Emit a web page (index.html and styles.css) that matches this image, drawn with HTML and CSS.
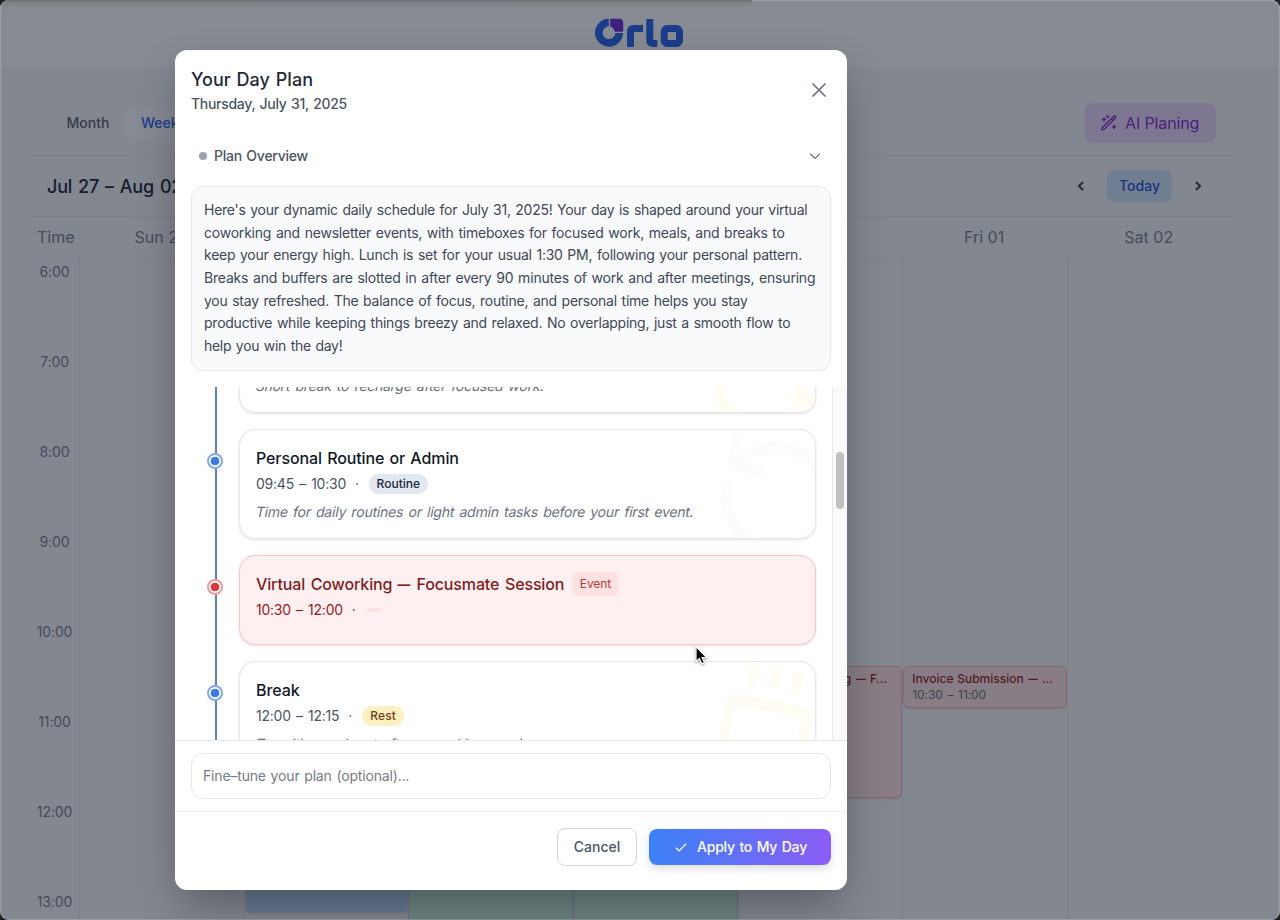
FILE: index.html
```html
<!DOCTYPE html>
<html lang="en"><head><meta charset="utf-8"><title>Orlo</title><link rel="stylesheet" href="styles.css"></head>
<body>
<div class="page">
  <header class="topbar">
    <svg class="logo" width="90" height="32" viewBox="0 0 90 32" role="img" aria-label="Orlo">
      <g fill="none" stroke="#2563eb">
        <path d="M13.800 4.500A10.200 10.200 0 1 0 24.200 15" stroke-width="7.600"/>
        <path d="M35.500 29V13.500q0-3 3-3h9.500" stroke-width="7"/>
        <path d="M54.800 1v21.500q0 3 3 3h4.500" stroke-width="7"/>
        <rect x="69.200" y="10.500" width="15.300" height="15" rx="3" stroke-width="7"/>
      </g>
      <path d="M15.200.7h9q4 0 4 4v9h-8.400q-.5-4.200-4.600-5.300z" fill="#6d28d9"/>
    </svg>
  </header>
  <main class="calendar">
    <div class="views"><div class="tabs"><span class="tab">Month</span><span class="tab tab-on">Week</span></div>
      <button class="ai"><svg width="16" height="16" viewBox="0 0 16 16" fill="none" stroke="currentColor" stroke-width="1.400" stroke-linecap="round" stroke-linejoin="round"><path d="M1.200 12.800 12.800 1.200q1-.6 1.700.2t0 1.600L3 14.600q-1 .6-1.800-.1t0-1.700zM10.500 3.800l1.700 1.700M3 3v3M1.500 4.500h3M6.500.8v1.800M5.600 1.700h1.800M13 10.200v3.200M11.400 11.800h3.200"/></svg><span>AI Planing</span></button></div>
    <div class="range"><h2>Jul 27 – Aug 02</h2><div class="nav"><svg width="24" height="24" viewBox="0 0 24 24"><path d="m14 8-4 4 4 4"/></svg><span class="today">Today</span><svg width="24" height="24" viewBox="0 0 24 24"><path d="m10 8 4 4-4 4"/></svg></div></div>
    <div class="days"><span class="time">Time</span><span>Sun 27</span><span>Mon 28</span><span>Tue 29</span><span>Wed 30</span><span>Thu 31</span><span>Fri 01</span><span>Sat 02</span></div>
    <div class="grid">
      <div class="hours"><span>6:00</span><span>7:00</span><span>8:00</span><span>9:00</span><span>10:00</span><span>11:00</span><span>12:00</span><span>13:00</span></div>
      <div class="col"></div>
      <div class="col"><div class="event blue"></div></div>
      <div class="col"><div class="event green"></div></div>
      <div class="col"><div class="event green"></div></div>
      <div class="col"><div class="event red tall"><b>Virtual Coworking <span class="dash">—</span> F…</b></div></div>
      <div class="col"><div class="event red"><b>Invoice Submission <span class="dash">—</span> …</b><span>10:30 – 11:00</span></div></div>
      <div class="col"></div>
    </div>
  </main>
</div>
<div class="overlay"><div class="loading"></div>
  <section class="modal">
    <div class="modal-head"><div><h1>Your Day Plan</h1><p>Thursday, July 31, 2025</p></div><svg width="24" height="24" viewBox="0 0 24 24"><path d="m5.500 5.500 13 13m0-13-13 13"/></svg></div>
    <div class="overview"><i></i><span>Plan Overview</span><svg width="14" height="14" viewBox="0 0 14 14"><path d="m2.200 4.800 4.800 4.700 4.800-4.700"/></svg></div>
    <div class="summary"><span class="s1">Here's your dynamic daily schedule for July 31, 2025! Your day is shaped around your virtual</span><span class="s2">coworking and newsletter events, with timeboxes for focused work, meals, and breaks to</span><span class="s3">keep your energy high. Lunch is set for your usual 1:30 PM, following your personal pattern.</span><span class="s4">Breaks and buffers are slotted in after every 90 minutes of work and after meetings, ensuring</span><span class="s5">you stay refreshed. The balance of focus, routine, and personal time helps you stay</span><span class="s6">productive while keeping things breezy and relaxed. No overlapping, just a smooth flow to</span><span class="s7">help you win the day!</span></div>
    <div class="scroll">
      <div class="timeline">
        <div class="item first"><article class="card"><svg class="mark yellow" width="134" height="134" viewBox="0 0 24 24"><path d="M10 2v2M14 2v2M6 2v2M16 8a1 1 0 0 1 1 1v8a4 4 0 0 1-4 4H7a4 4 0 0 1-4-4V9a1 1 0 0 1 1-1h14a4 4 0 1 1 0 8h-1"/></svg><p class="desc">Short break to recharge after focused work.</p></article></div>
        <div class="item routine-item"><i class="dot"></i><article class="card"><svg class="mark gray" width="134" height="134" viewBox="0 0 24 24"><path d="M3 12a9 9 0 1 0 9-9 9.750 9.750 0 0 0-6.740 2.740L3 8M3 3v5h5"/></svg><h3 class="t-routine">Personal Routine or Admin</h3><p class="meta"><time>09:45 – 10:30</time><em>·</em><span class="tag routine">Routine</span></p><p class="desc d2">Time for daily routines or light admin tasks before your first event.</p></article></div>
        <div class="item event-item"><i class="dot danger"></i><article class="card danger-card"><h3><span class="t-event">Virtual Coworking <span class="dash">—</span> Focusmate Session</span><span class="event-tag">Event</span></h3><p class="meta"><time>10:30 – 12:00</time><em>·</em><span class="empty-tag"></span></p></article></div>
        <div class="item break-item"><i class="dot"></i><article class="card"><svg class="mark yellow" width="134" height="134" viewBox="0 0 24 24"><path d="M10 2v2M14 2v2M6 2v2M16 8a1 1 0 0 1 1 1v8a4 4 0 0 1-4 4H7a4 4 0 0 1-4-4V9a1 1 0 0 1 1-1h14a4 4 0 1 1 0 8h-1"/></svg><h3 class="t-break">Break</h3><p class="meta"><time>12:00 – 12:15</time><em>·</em><span class="tag rest">Rest</span></p><p class="desc">Transition and rest after coworking session.</p></article></div>
      </div>
      <div class="track"><div class="thumb"></div></div>
    </div>
    <div class="tune"><div class="input">Fine–tune your plan (optional)...</div></div>
    <footer><button class="cancel">Cancel</button><button class="apply"><svg width="16" height="16" viewBox="0 0 16 16"><path d="m3 8.700 3.200 3.200L13 4.800"/></svg><span>Apply to My Day</span></button></footer>
  </section>
</div>
<svg class="cursor" width="16" height="22" viewBox="0 0 16 22"><path d="M2 1.500v15.300l3.400-3.200 2.300 5.200 2.700-1.200-2.300-5.100h4.600z" fill="#000" stroke="#fff" stroke-width="1.200"/></svg>
</body></html>
```
FILE: styles.css
```css
*{box-sizing:border-box}
body{margin:0;width:1280px;height:920px;overflow:hidden;font-family:Inter,sans-serif;background:#222;position:relative}
h1,h2,h3,p{margin:0;font-weight:500}
button{font-family:inherit;border:0}
svg{flex:none}
span,time,b{white-space:nowrap}
.page{width:1280px;height:920px;background:#f5f6f8;border-radius:9px;overflow:hidden}
.topbar{height:68px;background:#fbfcfd;display:flex;justify-content:center;padding-top:18px}
.calendar{padding:0 48px 0 32px}
.views{height:88px;border-bottom:1px solid #e5e7eb;display:flex;justify-content:space-between;padding:35px 16px 0 16px;align-items:flex-start}
.tabs{display:flex;padding-top:4px}
.tab{height:32px;padding:0 15px;width:78px;text-align:center;line-height:32px;font-size:14px;font-weight:500;color:#566070;margin-left:1px;letter-spacing:0}
.tab-on{background:#fcfdfe;border-radius:8px;color:#2563eb;margin-left:-1px;padding-left:15px;width:76px;text-align:left}
.ai{width:131px;height:40px;border-radius:8px;background:#ebd6fb;color:#7e2dce;font-size:16px;display:flex;align-items:center;gap:8px;padding:0 16px;letter-spacing:-.12px;line-height:20px}
.range{height:61px;border-bottom:1px solid #e5e7eb;padding:0 22px 0 15px;display:flex;align-items:center;justify-content:space-between}
h2{font-size:18px;color:#1a2233;word-spacing:1.300px;letter-spacing:-.18px}
.nav{display:flex;align-items:center;gap:14px}
.nav svg{fill:none;stroke:#374151;stroke-width:2}
.today{width:65px;height:32px;line-height:32px;text-align:center;background:#cfe5fd;color:#1d4ed8;font-size:14px;font-weight:500;border-radius:8px}
.days{height:41px;border-bottom:1px solid #e5e7eb;display:grid;grid-template-columns:47px repeat(7,164.660px);line-height:41px;text-align:center;color:#788090;font-size:16px}
.days span+span{padding-right:1px}
.time{text-align:left;padding-left:5px}
.grid{height:662px;display:grid;grid-template-columns:47px repeat(7,164.660px)}
.hours{display:flex;flex-direction:column;font-size:14px;color:#788090;align-items:center;padding:4px 2px 0 0;letter-spacing:-.1px}
.hours span{height:90px;line-height:20px;flex:none}
.col{border-left:1px solid #e5e8ec;display:flex;flex-direction:column;padding-top:408px}
.event{width:163.500px;height:42px;border-radius:6px;border:1px solid #fbb4b8;background:#fee2e2;color:#991b1b;font-size:12px;line-height:16px;padding:4px 8px;display:flex;flex-direction:column;box-shadow:0 1px 2px #0002}
.event b{font-weight:500;line-height:16px;word-spacing:.5px}
.event>span{color:#6b7280;word-spacing:1.500px;letter-spacing:-.1px}
.event.tall{height:132px}
.tall b{align-self:flex-end;padding-right:6px;letter-spacing:.1px}
.event.blue,.event.green{margin:112px 0 0 1px;width:163px;height:134px;border:0;background:#bfdbfe;border-radius:5px}
.event.green{background:#caf2dc;width:163px;height:170px;margin-left:0;border-radius:0;box-shadow:-1px 0 #d0c8e6,1px 0 #d0c8e6}
.overlay{position:absolute;inset:0;background:#11182780;padding:50px 0 0 175px;border-radius:9px;box-shadow:inset 0 0 0 1px #ffffff30}
.loading{position:absolute;left:0;top:0;width:752px;height:8px;border-radius:8px 0 3px 0;background:linear-gradient(#2226 0 1px,#2222 1px,#2220)}
.modal{width:672px;height:840px;background:#fff;border-radius:12px;overflow:hidden;display:flex;flex-direction:column;box-shadow:0 20px 45px -6px #0005}
.modal-head{height:80px;padding:18px 16px 0;display:flex;justify-content:space-between}
.modal-head svg{margin-top:10px;fill:none;stroke:#6b7280;stroke-width:1.700}
.modal-head h1{font-size:18px;line-height:24px;color:#1f2937;word-spacing:1px;letter-spacing:.03px}
.modal-head p{font-size:14px;line-height:20px;color:#4b5563;margin-top:2px;font-weight:500;word-spacing:1px;letter-spacing:-.3px}
.overview{height:52px;display:flex;align-items:center;padding:0 25px 1px 24px;color:#4b5563;font-size:14px;font-weight:500;letter-spacing:-.25px;word-spacing:1px}
.overview i{width:8px;height:8px;border-radius:50%;background:#9ca3af;margin-right:7px}
.overview svg{margin-left:auto;fill:none;stroke:#6b7280;stroke-width:1.200}
.summary{height:185px;margin:4px 16px 0;border:1px solid #e5e7eb;border-radius:12px;background:#f8fafc;padding:12px;color:#3f4857;font-size:14px;line-height:22.660px;display:flex;flex-direction:column;word-spacing:1px}
.s1{letter-spacing:-.27px}.s2{letter-spacing:-.22px}.s3{letter-spacing:-.24px}.s4{letter-spacing:-.2px}.s5{letter-spacing:-.25px}.s6{letter-spacing:-.24px}.s7{letter-spacing:-.3px}
.scroll{height:353px;margin-top:16px;display:flex;overflow:hidden}
.timeline{width:657px;padding:0 16px 0 64px;height:420px;background:linear-gradient(#5f7fae,#5f7fae) 40px 0/2px 100% no-repeat;flex:none}
.item{display:flex;position:relative}
.card{width:577px;height:110px;border:1px solid #e5e7eb;border-radius:16px;padding:16px;box-shadow:0 1px 3px #0000001c;background:#fff;position:relative;overflow:hidden}
.first .card{margin-top:-84px;padding-top:66px}
.routine-item{margin-top:16px}
.event-item{margin-top:16px}.event-item .card{height:90px}
.break-item{margin-top:16px}
.dot{position:absolute;left:-32px;top:24px;width:16px;height:16px;border-radius:50%;border:2px solid #82a9e8;background:radial-gradient(#3b78df 0 4px,#fff 4.600px)}
.danger{border-color:#ec9a9a;background:radial-gradient(#dc3636 0 4px,#fff 4.600px)}
.danger-card{background:#fef0f0;border-color:#f5c5c9}
.mark{position:absolute;right:-28px;top:1px;fill:none;stroke:#fcfcfc;stroke-width:2;stroke-linecap:round;stroke-linejoin:round;transform:rotate(12deg)}
.yellow{stroke:#fffcf3}
h3{font-size:16px;line-height:24px;color:#111827;position:relative;display:flex;gap:8px;word-spacing:1px;letter-spacing:-.1px}
.t-event{letter-spacing:-.13px;word-spacing:1.500px}
.dash{display:inline-block;transform:scaleX(.8);margin:0 -1.500px;font-weight:600}
.event .dash{margin:0 -.500px}
.meta{height:24px;margin-top:1.500px;display:flex;align-items:center;font-size:14px;font-weight:400;color:#4b5563;position:relative}
.meta time{word-spacing:1.500px;letter-spacing:-.23px}
.meta em{font-style:normal;margin:0 10px 0 9px}
.tag{height:20px;line-height:20px;border-radius:10px;padding:0 7.500px;font-size:12px;font-weight:500;color:#1e293b;background:#e2e8f0}
.rest{background:#fef0c3;color:#713f12;padding:0 8px;letter-spacing:.1px}
.desc{font-size:14px;line-height:20px;transform:skewX(-12deg);width:max-content;color:#6b7280;margin-top:6px;position:relative;font-weight:400;white-space:nowrap;word-spacing:1.500px;letter-spacing:-.24px}
.d2{letter-spacing:-.205px}
.danger-card h3{color:#7f1d1d}.danger-card .meta{color:#991b1b}
.event-tag{font-size:12px;font-weight:400;background:#fee2e2;color:#b33a3a;border-radius:6px;padding:0 7.500px;height:24px}
.empty-tag{width:16px;height:4px;border-radius:2px;background:#fee2e2}
.track{width:15px;border-left:1px solid #e5e7eb;background:#fafafa;padding:65px 3px 0}
.thumb{width:8px;height:57px;border-radius:4px;background:#c1c1c1}
.tune{height:72px;border-top:1px solid #e5e7eb;border-bottom:1px solid #f1f3f5;padding:12px 16px}
.input{height:46px;border:1px solid #e5e7eb;border-radius:12px;padding:0 11px;line-height:44px;font-size:14px;color:#757b87;word-spacing:1px;letter-spacing:-.17px}
footer{display:flex;justify-content:flex-end;align-items:center;gap:12px;padding:16px 16px 0}
footer button{font-size:14px;font-weight:500;border-radius:8px;line-height:17px}
.cancel{width:80px;height:38px;background:#fff;border:1px solid #d1d5db;color:#4b5563;padding:0 0 1px}
.apply{width:182px;height:36px;background:linear-gradient(90deg,#3b82f6,#8b5cf6);color:#fff;display:flex;align-items:center;justify-content:center;gap:8px;padding:0 0 1px;word-spacing:1px;letter-spacing:-.2px;box-shadow:0 4px 8px #0002}
.apply svg{fill:none;stroke:#fff;stroke-width:1.300}
.cursor{position:absolute;left:694px;top:645px;filter:drop-shadow(0 1px 1px #0006)}
```
